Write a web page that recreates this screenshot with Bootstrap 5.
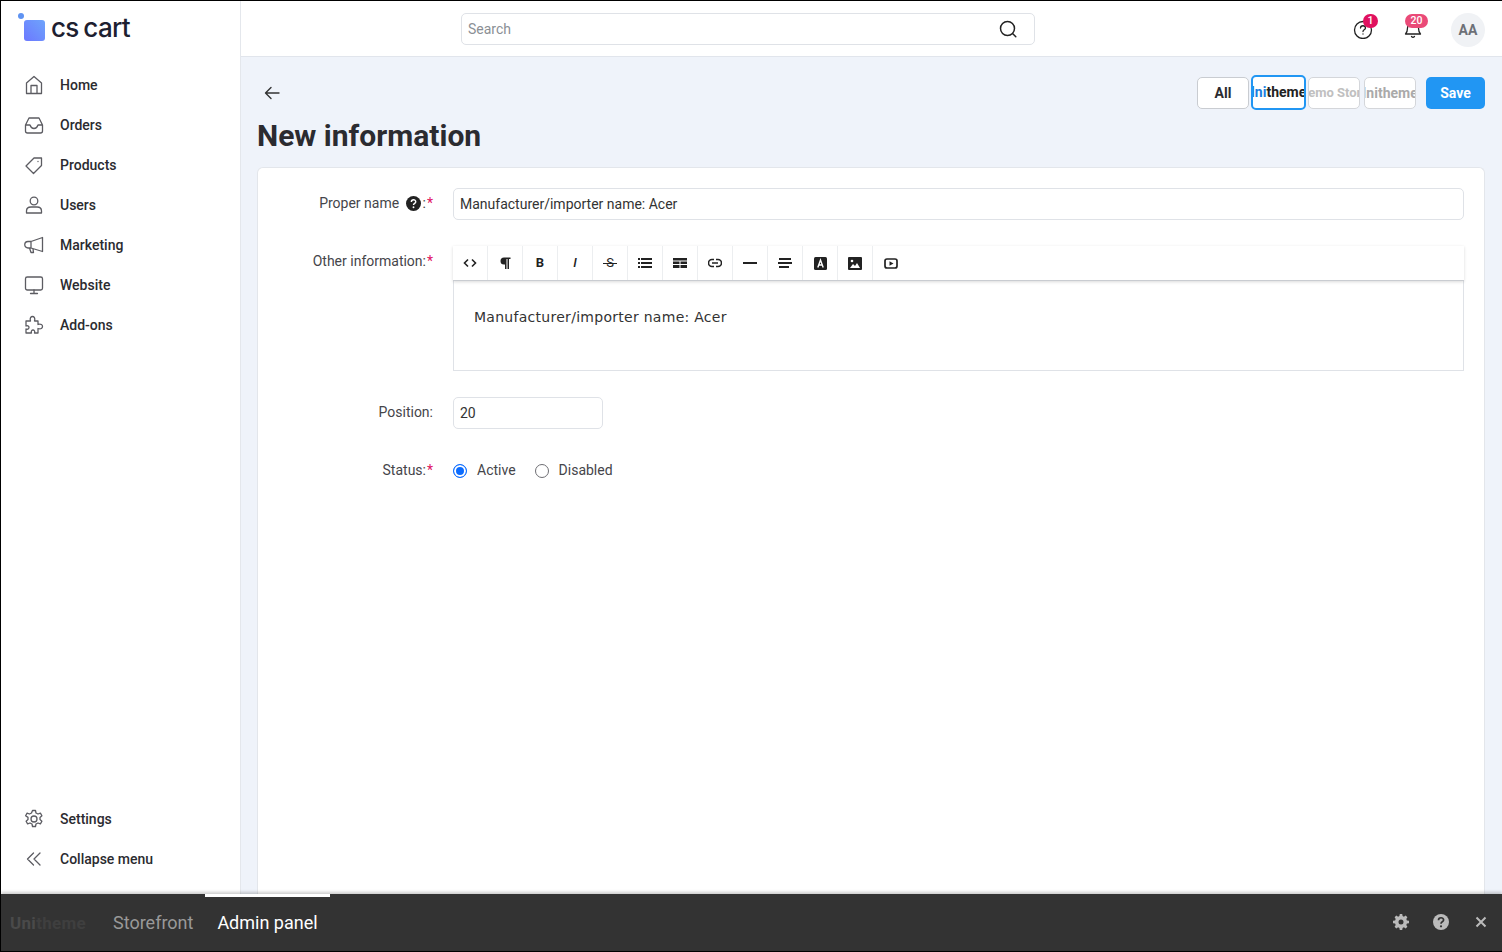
<!DOCTYPE html>
<html lang="en">
  <head>
    <title>New information</title>
    <meta charset="UTF-8" />
    <meta name="viewport" content="width=device-width" />
    <link rel="stylesheet" href="https://cdn.jsdelivr.net/npm/bootstrap@5.3.3/dist/css/bootstrap.min.css" type="text/css" />
    <script src="https://cdn.jsdelivr.net/npm/bootstrap@5.3.3/dist/js/bootstrap.bundle.min.js"></script>
    <style>
      html, body { height: 100%; overflow: hidden; }
      body { font-family: Roboto, sans-serif; font-size: 14px; color: #2b2b30; background: #000; }
      .app-frame { height: 952px; padding: 1px 0 1px 1px; }
      .app-inner { height: 100%; background: #eff3fa; }
      .app-main { height: 893px; }
      .side-panel { width: 240px; background: #fff; border-right: 1px solid #e4e7ec; padding-top: 64px; }
      .side-logo { position: absolute; left: 16px; top: 12px; }
      .side-logo-text { font-family: Inter, sans-serif; font-size: 26px; font-weight: 500; letter-spacing: -.7px; word-spacing: -1.5px; color: #1d2030; line-height: 30px; }
      .side-link { height: 40px; padding-left: 22px; font-weight: 500; font-size: 14px; color: #2b2b30; text-decoration: none; }
      .side-link svg { width: 22px; height: 22px; margin-right: 15px; stroke: #5c5c62; fill: none; stroke-width: 1.3; stroke-linecap: round; stroke-linejoin: round; }
      .side-foot { padding-bottom: 15px; }
      .top-strip { height: 56px; flex-shrink: 0; background: #fff; border-bottom: 1px solid #e1e5ec; }
      .search-box { position: absolute; left: 220px; top: 12px; width: 574px; height: 32px; border: 1px solid #dfe2e7; border-radius: 5px; padding-left: 6px; color: #8b8f95; }
      .search-box svg { position: absolute; right: 16px; top: 5px; }
      .top-icon { position: absolute; top: 16px; }
      .count-pill { position: absolute; background: #e0115f; color: #fff; border-radius: 10px; font-size: 10.5px; font-weight: 500; line-height: 14px; height: 14px; text-align: center; }
      .avatar-dot { position: absolute; left: 1210px; top: 12px; width: 34px; height: 34px; border-radius: 50%; background: #f0f2f5; color: #6d7077; font-weight: 700; font-size: 14px; line-height: 34px; text-align: center; }
      .work-area { padding: 0 17px 0 16px; min-height: 0; }
      .head-row { height: 61px; padding-top: 20px; }
      .store-btn { height: 32px; border: 1px solid #c9ccd1; border-radius: 5px; background: #fff; font-weight: 700; font-size: 14px; padding: 0; overflow: hidden; white-space: nowrap; display: flex; align-items: center; justify-content: center; }
      .store-all { width: 52px; color: #2b2b30; }
      .store-on { width: 55px; height: 35px; border: 2px solid #2196f3; color: #222; margin: -2px 2px 0 2px; }
      .store-on span span { color: #1a7fe0; }
      .store-off { width: 52px; color: #aaa; border-color: #d4d6da; }
      .store-demo { font-size: 13px; color: #c0c0c0; }
      .store-save { width: 59px; height: 32px; border-radius: 5px; background: #2196f3; color: #fff; font-weight: 700; border: 0; margin-left: 10px; font-size: 14px; padding: 0; }
      .page-title { font-size: 30px; font-weight: 700; line-height: 36px; color: #2b2b30; margin: 0 0 13px; }
      .form-sheet { background: #fff; border: 1px solid #e3e6eb; border-bottom: 0; border-radius: 6px 6px 0 0; height: 727px; padding: 20px 20px 0 0; }
      .field-label { width: 175px; text-align: right; margin-right: 20px; color: #45454a; flex-shrink: 0; line-height: 21px; }
      .field-raised { padding-bottom: 2px; }
      .field-label svg { margin: 0 2px 0 3px; }
      .req { color: #e0115f; margin-left: 1px; }
      .name-row { margin-bottom: 26px; }
      .info-row { margin-bottom: 26px; }
      .info-label { padding-top: 5px; }
      .status-row { margin-top: 31px; }
      .text-field { height: 32px; border: 1px solid #dfe2e7; border-radius: 5px; padding: 0 6px; line-height: 30px; color: #333; }
      .position-field { width: 150px; }
      .tool-strip { height: 35px; background: #fff; box-shadow: 0 1px 3px rgba(0,0,0,.15); border-bottom: 1px solid #c9ccd1; position: relative; }
      .tool-cell { width: 35px; height: 34px; border-right: 1px solid #eceef0; }
      .tool-cell:last-child { border-right: 0; }
      .tool-cell span { font-size: 13px; font-weight: 700; color: #222; }
      .tool-cell .tool-strike { font-size: 13px; font-weight: 400; position: relative; }
      .tool-strike::after { content: ""; position: absolute; left: -3px; right: -3px; top: 50%; height: 1px; background: #222; }
      .tool-cell .tool-italic { font-style: italic; font-weight: 500; }
      .editor-body { height: 90px; border: 1px solid #dfe2e7; border-top: 0; padding: 26px 20px; font-family: "DejaVu Sans", sans-serif; font-size: 14px; letter-spacing: .28px; line-height: 20px; color: #333; }
      .radio-mark { width: 14px; height: 14px; border-radius: 50%; border: 1px solid #6e6e73; background: #fff; display: inline-block; margin-right: 10px; }
      .radio-mark-on { border-color: #0b6cff; box-shadow: inset 0 0 0 2px #fff; background: #0b6cff; }
      .radio-text { color: #45454a; }
      .radio-gap { margin-right: 19px; }
      .bottom-strip { height: 57px; background: #333; position: relative; box-shadow: 0 -2px 3px rgba(0,0,0,.2); }
      .strip-tab { position: absolute; top: 0; height: 57px; line-height: 58px; font-size: 18px; color: #999; text-align: center; }
      .strip-tab-on { color: #fff; border-top: 3px solid #fff; line-height: 52px; }
      .strip-brand { position: absolute; left: 9px; top: 19px; font-weight: 700; font-size: 17px; letter-spacing: .3px; line-height: 20px; color: #4a4a4a; }
      .strip-brand i { font-style: normal; color: #3f3f3f; }
      .strip-icon { position: absolute; top: 20px; fill: #bbb; }
      .strip-close { top: 22px; }
    </style>
  </head>
  <body>
    <div class="app-frame">
      <div class="app-inner d-flex flex-column position-relative">
        <div class="app-main d-flex">
          <nav class="side-panel d-flex flex-column flex-shrink-0 position-relative">
            <div class="side-logo d-flex align-items-center">
              <svg width="30" height="30" viewBox="0 0 30 30" class="me-1"><defs><linearGradient id="lg" x1="1" y1="0" x2="0" y2="1"><stop offset="0" stop-color="#6ea4fb"/><stop offset="1" stop-color="#6c78ff"/></linearGradient></defs><circle cx="4" cy="3" r="3" fill="#5f93f2"/><rect x="7" y="7" width="21" height="21" rx="3" fill="url(#lg)"/></svg>
              <span class="side-logo-text">cs cart</span>
            </div>
            <a class="side-link d-flex align-items-center" href="#"><svg viewBox="0 0 22 22"><path d="M3.500 19.500V9L11 2.500 18.500 9v10.500zM8 19.500V11.500h6v8"/></svg>Home</a>
            <a class="side-link d-flex align-items-center" href="#"><svg viewBox="0 0 22 22"><path d="M2.500 11v6a2 2 0 0 0 2 2h13a2 2 0 0 0 2-2v-6l-3.500-7H6zM2.500 11H7c1 3 2.500 3.500 4 3.500s3-.5 4-3.500h4.500"/></svg>Orders</a>
            <a class="side-link d-flex align-items-center" href="#"><svg viewBox="0 0 22 22"><path d="M3 12 11 4h7.500v7.500L10.500 19.500zM15 7.500v.1"/></svg>Products</a>
            <a class="side-link d-flex align-items-center" href="#"><svg viewBox="0 0 22 22"><circle cx="11" cy="7" r="3.800"/><path d="M3.500 19v-2c0-2.500 2-4 4.500-4h6c2.500 0 4.500 1.500 4.500 4v2z"/></svg>Users</a>
            <a class="side-link d-flex align-items-center" href="#"><svg viewBox="0 0 22 22"><path d="M19.500 3.500v14L8 14H5a3 3 0 0 1 0-6.500h3zM8 7.500V14M6.500 14l1.500 4.500h2.500L10 15"/></svg>Marketing</a>
            <a class="side-link d-flex align-items-center" href="#"><svg viewBox="0 0 22 22"><rect x="2.500" y="3" width="17" height="13" rx="1.800"/><path d="M11 16v3.500M7.500 19.500h7"/></svg>Website</a>
            <a class="side-link d-flex align-items-center" href="#"><svg viewBox="0 0 22 22"><path d="M3 7h4.500c-1-3 .5-4.500 2-4.500s3 1.500 2 4.500H15v3.500c3-1 4.500.5 4.500 2s-1.500 3-4.500 2V19h-3.500c.8-2-.5-3-1.500-3s-2.300 1-1.500 3H3v-4c2 .8 3-.5 3-1.500S5 11.200 3 12z"/></svg>Add-ons</a>
            <div class="mt-auto side-foot">
              <a class="side-link d-flex align-items-center" href="#"><svg viewBox="0 0 22 22"><circle cx="11" cy="11" r="3"/><path d="M9.500 2.500h3l.5 2.500 2 1 2.400-.9 1.500 2.600-1.900 1.700v2.200l1.900 1.700-1.500 2.600-2.400-.9-2 1-.5 2.500h-3l-.5-2.500-2-1-2.400.9-1.500-2.600 1.900-1.700V9.400L2.600 7.700l1.500-2.600 2.400.9 2-1z"/></svg>Settings</a>
              <a class="side-link d-flex align-items-center" href="#"><svg viewBox="0 0 22 22"><path d="M10.500 5 4.500 11l6 6M17 5l-6 6 6 6"/></svg>Collapse menu</a>
            </div>
          </nav>
          <div class="flex-grow-1 d-flex flex-column position-relative">
            <div class="top-strip"></div>
            <div class="search-box d-flex align-items-center">Search
              <svg width="20" height="20" viewBox="0 0 20 20" fill="none" stroke="#222" stroke-width="1.500" stroke-linecap="round"><circle cx="9.500" cy="9.500" r="7"/><path d="m14.800 14.800 3 3"/></svg>
            </div>
            <svg class="top-icon" style="left:1111px" width="22" height="22" viewBox="0 0 22 22" fill="none" stroke="#222" stroke-width="1.300" stroke-linecap="round"><circle cx="11" cy="13" r="8.500"/><path d="M8.500 11c0-3 5-3 5 0 0 1.800-2.500 1.800-2.500 3.500M11 17v.1"/></svg>
            <span class="count-pill" style="left:1122px;top:13px;width:15px">1</span>
            <svg class="top-icon" style="left:1161px" width="22" height="22" viewBox="0 0 22 22" fill="none" stroke="#222" stroke-width="1.300" stroke-linecap="round" stroke-linejoin="round"><path d="M3.500 17c1.500-1.500 2-3 2-6a5.500 5.500 0 0 1 11 0c0 3 .5 4.500 2 6zM9.500 19.500c.8.8 2.200.8 3 0"/></svg>
            <span class="count-pill" style="left:1164px;top:13px;width:23px;background:#ea4a78">20</span>
            <div class="avatar-dot">AA</div>
            <main class="work-area flex-grow-1">
              <div class="head-row d-flex justify-content-between">
                <svg width="28" height="32" viewBox="0 0 28 32" fill="none" stroke="#333" stroke-width="1.400" stroke-linecap="round" stroke-linejoin="round"><path d="M22 16H9M14 10.500 8.500 16l5.500 5.500"/></svg>
                <div class="d-flex align-items-start">
                  <button class="store-btn store-all">All</button>
                  <button class="store-btn store-on"><span><span>Ini</span>theme</span></button>
                  <button class="store-btn store-off store-demo">Demo Store</button>
                  <button class="store-btn store-off ms-1">Initheme</button>
                  <button class="store-save">Save</button>
                </div>
              </div>
              <h1 class="page-title">New information</h1>
              <div class="form-sheet">
                <div class="d-flex align-items-center name-row">
                  <div class="field-label field-raised">Proper name <svg width="15" height="15" viewBox="0 0 16 16" class="align-text-bottom"><circle cx="8" cy="8" r="8" fill="#222"/><path d="M5.700 6.300c0-3 4.700-3 4.700-.2 0 1.800-2.400 1.600-2.400 3.500" fill="none" stroke="#fff" stroke-width="1.500"/><circle cx="8" cy="12" r="1" fill="#fff"/></svg>:<span class="req">*</span></div>
                  <div class="text-field flex-grow-1">Manufacturer/importer name: Acer</div>
                </div>
                <div class="d-flex info-row">
                  <div class="field-label info-label">Other information:<span class="req">*</span></div>
                  <div class="flex-grow-1">
                    <div class="tool-strip d-flex">
                      <div class="tool-cell d-flex align-items-center justify-content-center"><svg width="16" height="12" viewBox="0 0 16 12" fill="none" stroke="#222" stroke-width="1.600"><path d="M6 2.500 2.500 6 6 9.500M10 2.500 13.500 6 10 9.500"/></svg></div>
                      <div class="tool-cell d-flex align-items-center justify-content-center"><svg width="12" height="12" viewBox="0 0 12 12" fill="#222"><path d="M5 .5h6.500V2H10v10H8.500V2h-1v10H6V7.500H5a3.500 3.500 0 0 1 0-7z"/></svg></div>
                      <div class="tool-cell d-flex align-items-center justify-content-center"><span>B</span></div>
                      <div class="tool-cell d-flex align-items-center justify-content-center"><span class="tool-italic">I</span></div>
                      <div class="tool-cell d-flex align-items-center justify-content-center"><span class="tool-strike">S</span></div>
                      <div class="tool-cell d-flex align-items-center justify-content-center"><svg width="14" height="10" viewBox="0 0 14 10" fill="#222"><path d="M0 0h2v2H0zM3 0h11v2H3zM0 4h2v2H0zM3 4h11v2H3zM0 8h2v2H0zM3 8h11v2H3z"/></svg></div>
                      <div class="tool-cell d-flex align-items-center justify-content-center"><svg width="14" height="10" viewBox="0 0 14 10" fill="#222"><path d="M0 0h14v2.500H0zM0 3.500h6.500V6H0zM7.500 3.500H14V6H7.500zM0 7h6.500v3H0zM7.500 7H14v3H7.500z"/></svg></div>
                      <div class="tool-cell d-flex align-items-center justify-content-center"><svg width="14" height="10" viewBox="0 0 14 10" fill="none" stroke="#222" stroke-width="1.600"><path d="M6 1.500H4a3.500 3.500 0 0 0 0 7h2M8 1.500h2a3.500 3.500 0 0 1 0 7H8M4 5h6"/></svg></div>
                      <div class="tool-cell d-flex align-items-center justify-content-center"><svg width="14" height="2" viewBox="0 0 14 2" fill="#222"><rect width="14" height="2"/></svg></div>
                      <div class="tool-cell d-flex align-items-center justify-content-center"><svg width="14" height="10" viewBox="0 0 14 10" fill="#222"><path d="M1 0h12v2H1zM0 4h14v2H0zM1 8h10v2H1z"/></svg></div>
                      <div class="tool-cell d-flex align-items-center justify-content-center"><svg width="13" height="13" viewBox="0 0 13 13"><rect width="13" height="13" rx="1.500" fill="#222"/><path d="M3.800 10.500 6.500 3l2.700 7.500M4.800 8h3.400" fill="none" stroke="#fff" stroke-width="1.400"/></svg></div>
                      <div class="tool-cell d-flex align-items-center justify-content-center"><svg width="14" height="13" viewBox="0 0 14 13"><rect width="14" height="13" rx="1" fill="#222"/><circle cx="4" cy="4" r="1.300" fill="#fff"/><path d="m2 11 3-4 2 2 2-3 3 5z" fill="#fff"/></svg></div>
                      <div class="tool-cell d-flex align-items-center justify-content-center"><svg width="14" height="11" viewBox="0 0 14 11"><rect x="1" y="1" width="12" height="9" rx="2" fill="none" stroke="#222" stroke-width="1.700"/><path d="M5.500 3.200v4.600L9.500 5.500z" fill="#222"/></svg></div>
                    </div>
                    <div class="editor-body">Manufacturer/importer name: Acer</div>
                  </div>
                </div>
                <div class="d-flex align-items-center">
                  <div class="field-label field-raised">Position:</div>
                  <div class="text-field position-field">20</div>
                </div>
                <div class="d-flex align-items-center status-row">
                  <div class="field-label">Status:<span class="req">*</span></div>
                  <span class="radio-mark radio-mark-on"></span><span class="radio-text radio-gap">Active</span>
                  <span class="radio-mark"></span><span class="radio-text">Disabled</span>
                </div>
              </div>
            </main>
          </div>
        </div>
        <footer class="bottom-strip">
          <div class="strip-brand">Uni<i>theme</i></div>
          <div class="strip-tab" style="left:112px">Storefront</div>
          <div class="strip-tab strip-tab-on" style="left:204px;width:125px">Admin panel</div>
          <svg class="strip-icon" style="left:1392px" width="16" height="16" viewBox="0 0 16 16"><path d="M6.800 0h2.400l.4 2.100 1.300.6 1.800-1.100 1.700 1.700-1.100 1.800.6 1.300 2.100.4v2.400l-2.100.4-.6 1.300 1.100 1.800-1.700 1.700-1.800-1.100-1.300.6-.4 2.100H6.800l-.4-2.100-1.300-.6-1.800 1.100-1.700-1.700 1.100-1.800-.6-1.300L0 9.200V6.800l2.100-.4.6-1.300-1.100-1.800 1.700-1.700 1.800 1.100 1.300-.6zM8 5.500a2.500 2.500 0 1 0 0 5 2.500 2.500 0 0 0 0-5z"/></svg>
          <svg class="strip-icon" style="left:1432px" width="16" height="16" viewBox="0 0 16 16"><circle cx="8" cy="8" r="8"/><path d="M5.500 6.200c0-3.200 5.100-3.200 5.100-.2 0 1.900-2.600 1.700-2.600 3.700" fill="none" stroke="#333" stroke-width="1.700"/><circle cx="8" cy="12.300" r="1.100" fill="#333"/></svg>
          <svg class="strip-icon strip-close" style="left:1474px" width="12" height="12" viewBox="0 0 12 12" fill="none"><path d="m1.500 1.500 9 9M10.500 1.500l-9 9" stroke="#bbb" stroke-width="2"/></svg>
        </footer>
      </div>
    </div>
  </body>
</html>
